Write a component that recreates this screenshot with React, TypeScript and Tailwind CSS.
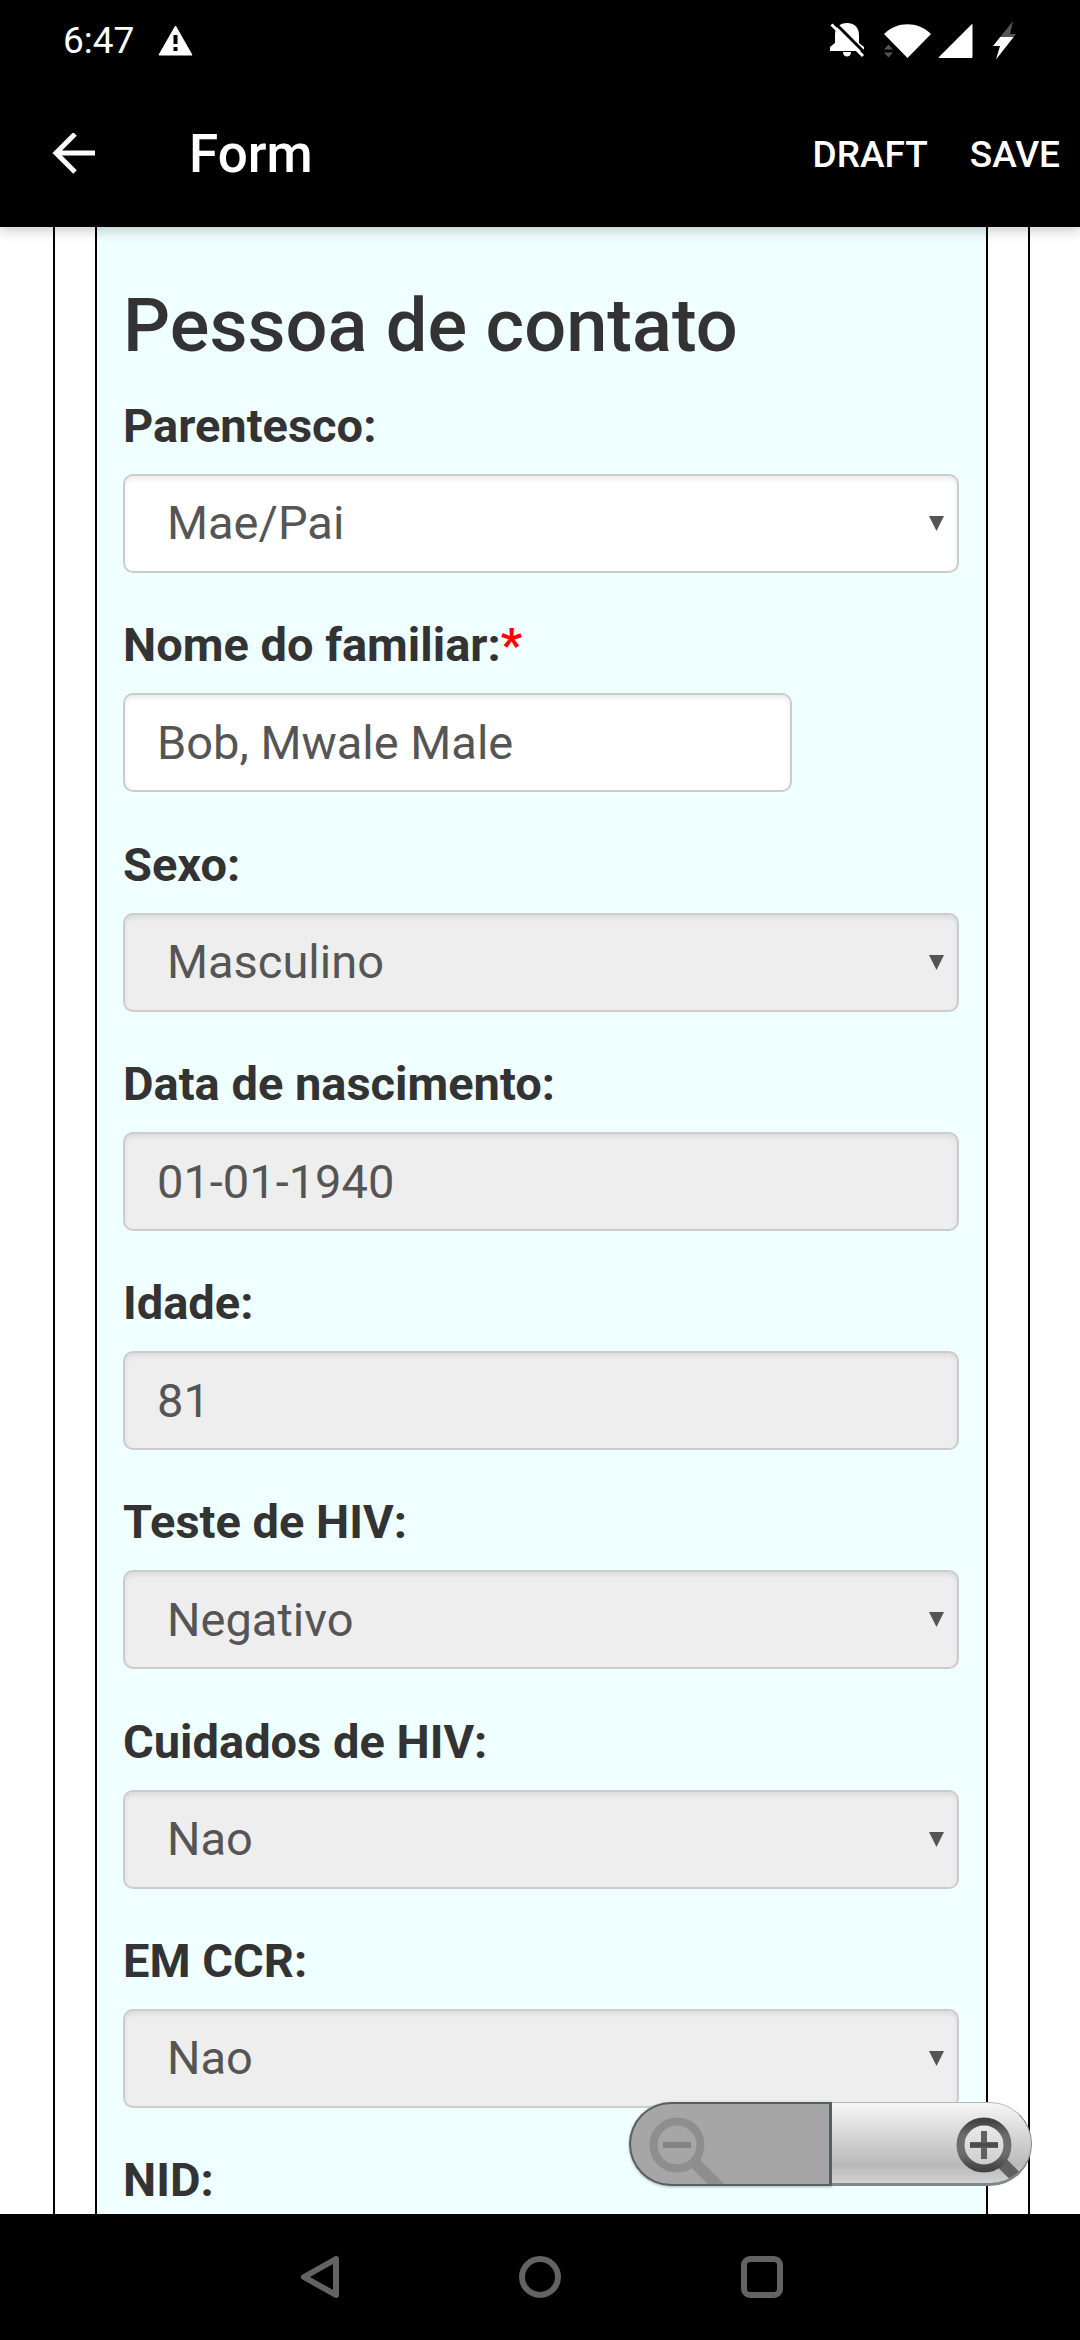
import { useState } from 'react';

interface Field {
  id: string;
  label: string;
  value: string;
  kind: 'select' | 'text';
  required?: boolean;
  disabled?: boolean;
}

const FIELDS: Field[] = [
  { id: 'parentesco', label: 'Parentesco:', value: 'Mae/Pai', kind: 'select' },
  { id: 'nome', label: 'Nome do familiar:', value: 'Bob, Mwale Male', kind: 'text', required: true },
  { id: 'sexo', label: 'Sexo:', value: 'Masculino', kind: 'select', disabled: true },
  { id: 'nascimento', label: 'Data de nascimento:', value: '01-01-1940', kind: 'text', disabled: true },
  { id: 'idade', label: 'Idade:', value: '81', kind: 'text', disabled: true },
  { id: 'teste-hiv', label: 'Teste de HIV:', value: 'Negativo', kind: 'select', disabled: true },
  { id: 'cuidados-hiv', label: 'Cuidados de HIV:', value: 'Nao', kind: 'select', disabled: true },
  { id: 'em-ccr', label: 'EM CCR:', value: 'Nao', kind: 'select', disabled: true },
];

const labelClass = 'text-[47px] leading-[69px] font-bold';

const controlClass =
  'block h-[99px] rounded-[10px] border-2 border-[#cccccc] bg-white text-[47px] text-[#555555] opacity-100 shadow-[inset_0_3px_4px_rgba(0,0,0,0.08)] outline-none disabled:bg-[#eeeeee]';

const StatusBar = () => (
  <div className="flex h-[81px] items-center justify-between pr-[62px] pl-[63px]">
    <div className="flex items-center gap-6">
      <span className="text-[37px] leading-none">6:47</span>
      <svg width="35" height="32" viewBox="0 0 35 32" fill="white" aria-hidden="true">
        <path d="M17.500 1 L34 30 H1 Z" stroke="white" strokeWidth="1" strokeLinejoin="round" />
        <path d="M15.500 10h4v9h-4zM15.500 22h4v4h-4z" fill="black" />
      </svg>
    </div>
    <svg width="188" height="40" viewBox="0 0 188 40" fill="white" aria-hidden="true">
      <defs>
        <linearGradient id="charge" gradientUnits="userSpaceOnUse" x1="0" y1="0" x2="0" y2="40">
          <stop offset="0.41" stopColor="#555555" />
          <stop offset="0.41" stopColor="white" />
        </linearGradient>
      </defs>
      {/* muted bell */}
      <path d="M0 30v-4l5-4v-8C5 6 10 2 17 2s12 4 12 12v8l5 4v4z" />
      <path d="M13 31h8c0 6-8 6-8 0z" />
      <path d="M4 1 L36 33" stroke="black" strokeWidth="3" />
      <path d="M1.500 3.500 L33 35" stroke="white" strokeWidth="3" />
      {/* wifi with activity arrows */}
      <path d="M54 13c13-13 34-13 47 0L77.500 37z" />
      <path d="M54 28.500l4.500-5 4.500 5zM54 31.500l4.500 5 4.500-5z" fill="#555555" />
      {/* signal */}
      <path d="M142 3.500v33h-33z" stroke="white" strokeWidth="1" strokeLinejoin="round" />
      {/* battery */}
      <path d="M183 0l-3 13h6l-20 25.500 4-13.500h-7z" fill="url(#charge)" />
    </svg>
  </div>
);

const AppBar = () => (
  <div className="flex h-[146px] items-center pt-[2px] pr-5 font-medium">
    <button type="button" aria-label="Back" className="ml-[52px]">
      <svg width="44" height="44" viewBox="0 0 44 44" fill="none" stroke="white" strokeWidth="5" aria-hidden="true">
        <path d="M23 1 L4 20 L23 39M4 20H43" />
      </svg>
    </button>
    <h1 className="ml-[93px] flex-1 text-[53px]">Form</h1>
    <div className="flex gap-[42px] text-[37px]">
      <button type="button">DRAFT</button>
      <button type="button">SAVE</button>
    </div>
  </div>
);

const FormField = ({ field }: { field: Field }) => {
  const [value, setValue] = useState(field.value);

  return (
    <div className="flex flex-col gap-[14px]">
      <label htmlFor={field.id} className={labelClass}>
        {field.label}
        {field.required && <span className="text-[#ff0000]">*</span>}
      </label>
      {field.kind === 'select' ? (
        <div className="relative">
          <select
            id={field.id}
            value={value}
            disabled={field.disabled}
            onChange={(e) => setValue(e.target.value)}
            className={`${controlClass} w-full appearance-none pl-[42px]`}
          >
            <option>{field.value}</option>
          </select>
          <svg
            className="pointer-events-none absolute inset-y-0 right-[15px] my-auto"
            width="15"
            height="15"
            viewBox="0 0 15 15"
            fill="#555555"
            aria-hidden="true"
          >
            <path d="M0 0h15L7.500 15z" />
          </svg>
        </div>
      ) : (
        <input
          id={field.id}
          type="text"
          value={value}
          disabled={field.disabled}
          onChange={(e) => setValue(e.target.value)}
          className={`${controlClass} px-[32px] ${field.required ? 'w-4/5' : 'w-full'}`}
        />
      )}
    </div>
  );
};

const ZoomControls = () => (
  <div className="absolute right-[48px] bottom-[28px] flex h-[84px] w-[403px]">
    <button
      type="button"
      disabled
      aria-label="Zoom out"
      className="w-[203px] overflow-hidden rounded-l-full border-2 border-r-3 border-[#566060] bg-[#a6a6a6] shadow-[0_1px_3px_rgba(0,0,0,0.3)]"
    >
      <svg width="96" height="80" viewBox="0 0 96 80" fill="none" stroke="#8e8e8e" aria-hidden="true">
        <path d="M64 59 L92 87" strokeWidth="12" />
        <circle cx="46" cy="41" r="23.500" strokeWidth="8" />
        <path d="M32 41h28" stroke="#848484" strokeWidth="6" />
      </svg>
    </button>
    <button
      type="button"
      aria-label="Zoom in"
      className="flex flex-1 justify-end overflow-hidden rounded-r-full border border-b-3 border-l-0 border-[#7f8888] border-t-[#b4b8b8] bg-linear-to-b from-[#f6f6f6] via-[#b9b9b9] via-78% to-[#d2d2d2]"
    >
      <svg width="78" height="80" viewBox="0 0 78 80" fill="none" stroke="#606060" aria-hidden="true">
        <defs>
          <linearGradient id="lens" x1="0" y1="0" x2="0" y2="1">
            <stop offset="0" stopColor="#444444" />
            <stop offset="0.3" stopColor="#6c6c6c" />
            <stop offset="0.7" stopColor="#6c6c6c" />
            <stop offset="1" stopColor="#444444" />
          </linearGradient>
        </defs>
        <path d="M49 60 L72 83" strokeWidth="12" />
        <circle cx="31" cy="42" r="23.500" fill="#ffffff" fillOpacity="0.3" stroke="url(#lens)" strokeWidth="8" />
        <path d="M17 42h28M31 28v28" strokeWidth="6" />
        <path d="M17 42h28" stroke="#4c4c4c" strokeWidth="4" />
      </svg>
    </button>
  </div>
);

const NavBar = () => (
  <nav className="flex h-[126px] items-center justify-center gap-[178px] bg-black">
    <button type="button" aria-label="Back">
      <svg width="44" height="44" viewBox="0 0 44 44" fill="none" stroke="#636363" strokeWidth="6" strokeLinejoin="round" aria-hidden="true">
        <path d="M40 4v36L8 22z" />
      </svg>
    </button>
    <button type="button" aria-label="Home">
      <svg width="44" height="44" viewBox="0 0 44 44" fill="none" stroke="#636363" strokeWidth="6" aria-hidden="true">
        <circle cx="22" cy="22" r="18" />
      </svg>
    </button>
    <button type="button" aria-label="Recent apps">
      <svg width="44" height="44" viewBox="0 0 44 44" fill="none" stroke="#636363" strokeWidth="6" aria-hidden="true">
        <rect x="4" y="4" width="36" height="36" rx="6" />
      </svg>
    </button>
  </nav>
);

export default function App() {
  return (
    <div className="flex min-h-screen flex-col bg-white font-['Roboto',sans-serif] text-[#333333]">
      <header className="relative z-10 bg-black text-white shadow-[0_4px_12px_rgba(0,0,0,0.2)]">
        <StatusBar />
        <AppBar />
      </header>
      <main className="relative flex flex-1 pr-[50px] pl-[53px]">
        <div className="flex flex-1 border-x-2 border-black px-[40px]">
          <form className="flex flex-1 flex-col border-x-2 border-black bg-[#f0ffff] pt-[58px] pr-[27px] pl-[26px]">
            <h2 className="mb-[24px] text-[74px] leading-[82px] font-medium">Pessoa de contato</h2>
            <div className="flex flex-1 flex-col justify-between gap-[37px]">
              {FIELDS.map((field) => (
                <FormField key={field.id} field={field} />
              ))}
              <span className={labelClass}>NID:</span>
            </div>
          </form>
        </div>
        <ZoomControls />
      </main>
      <NavBar />
    </div>
  );
}
